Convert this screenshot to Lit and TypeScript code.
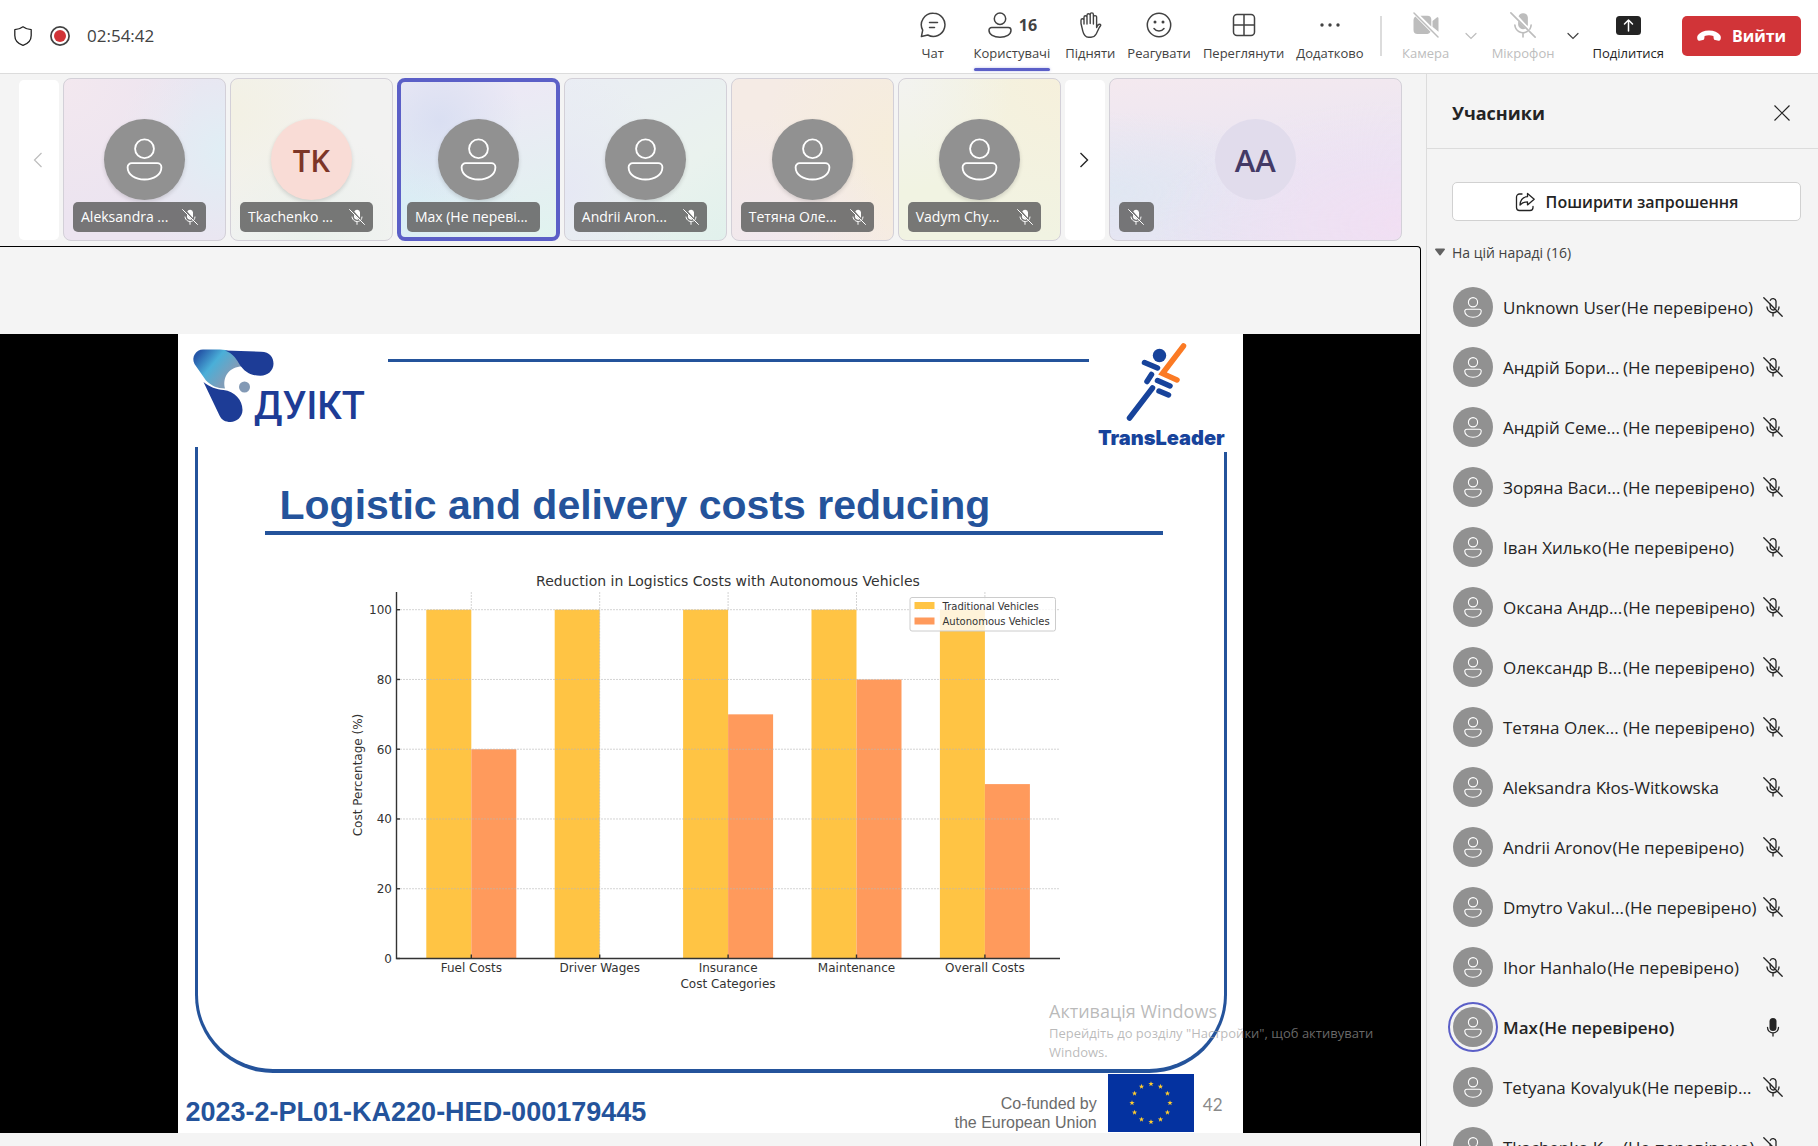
import { LitElement, html, svg, css, nothing } from "lit";
import { customElement, property } from "lit/decorators.js";
import { classMap } from "lit/directives/class-map.js";

interface Tile { name: string; muted: boolean; tone: string; initials?: string; active?: boolean; }
interface Person { name: string; note?: string; cut?: boolean; speaking?: boolean; }

const NOTE = "(Не перевірено)";

const TILES: Tile[] = [
  { name: "Aleksandra ...", muted: true, tone: "lilac" },
  { name: "Tkachenko ...", muted: true, tone: "sand", initials: "TK" },
  { name: "Max (Не переві...", muted: false, tone: "sky", active: true },
  { name: "Andrii Aron...", muted: true, tone: "mint" },
  { name: "Тетяна Оле...", muted: true, tone: "peach" },
  { name: "Vadym Chy...", muted: true, tone: "lemon" },
];

const PEOPLE: Person[] = [
  { name: "Unknown User", note: NOTE },
  { name: "Андрій Бори...", note: NOTE, cut: true },
  { name: "Андрій Семе...", note: NOTE, cut: true },
  { name: "Зоряна Васи...", note: NOTE, cut: true },
  { name: "Іван Хилько", note: NOTE },
  { name: "Оксана Андр...", note: NOTE, cut: true },
  { name: "Олександр В...", note: NOTE, cut: true },
  { name: "Тетяна Олек...", note: NOTE, cut: true },
  { name: "Aleksandra Kłos-Witkowska" },
  { name: "Andrii Aronov", note: NOTE },
  { name: "Dmytro Vakul...", note: NOTE, cut: true },
  { name: "Ihor Hanhalo", note: NOTE },
  { name: "Max", note: NOTE, speaking: true },
  { name: "Tetyana Kovalyuk", note: "(Не перевір..." },
  { name: "Tkachenko K...", note: NOTE, cut: true },
];

const personIcon = (stroke: number) => html`<svg class="person" viewBox="0 0 36 42" fill="none" stroke="currentColor" stroke-width=${stroke} aria-hidden="true">
  <circle cx="18" cy="10.5" r="9.2"/>
  <path d="M5.5 24.5h25a4 4 0 0 1 4 4c0 7.5-7.5 12-16.5 12S1.5 36 1.5 28.5a4 4 0 0 1 4-4z"/>
</svg>`;

const micOffOutline = html`<svg class="mic" viewBox="0 0 20 20" fill="none" stroke="currentColor" stroke-width="1.3" stroke-linecap="round" aria-hidden="true">
  <path d="M7.2 7.2V10a3 3 0 0 0 4.400 2.600M7.300 3.300A3 3 0 0 1 13 4.200V10q0 .6-.2 1.100"/>
  <path d="M4 10a6 6 0 0 0 9.400 4.600M16 10a6 6 0 0 1-.8 3M10 16v3"/>
  <path d="M.8.8l18.400 18.400"/>
</svg>`;

const micOffFilled = html`<svg class="mic" viewBox="0 0 24 24" fill="none" stroke="currentColor" stroke-width="1.5" stroke-linecap="round" aria-hidden="true">
  <path d="M7.500 8.200V12a4.500 4.500 0 0 0 6.900 3.200zM7.900 3.900A4.500 4.500 0 0 1 16.500 5v7l-.4 1z" fill="currentColor" stroke="none"/>
  <path d="M4.500 12a7.500 7.500 0 0 0 11.300 6M19.500 12a7.500 7.500 0 0 1-1.200 3.800M12 19.400v3.600M.8.8l22.400 22.400"/>
</svg>`;

const micFilled = html`<svg class="mic" viewBox="0 0 20 20" fill="none" stroke="currentColor" stroke-width="1.3" stroke-linecap="round" aria-hidden="true">
  <rect x="6.5" y="1" width="7" height="13" rx="3.5" fill="currentColor" stroke="none"/>
  <path d="M4.5 10.5a5.5 5.5 0 0 0 11 0M10 16v3"/>
</svg>`;

const chevron = html`<svg class="chev" viewBox="0 0 12 8" fill="none" stroke="currentColor" stroke-width="1.2" stroke-linecap="round" aria-hidden="true"><path d="M1 1.5l5 5 5-5"/></svg>`;

@customElement("call-toolbar")
export class CallToolbar extends LitElement {
  static styles = css`
    :host { display: block; }
    * { box-sizing: border-box; }
    .bar { display: flex; align-items: center; height: 74px; padding: 0 17px 2px 13px; background: #fff; border-bottom: 1px solid #dcdcdc; color: #424242; }
    button { font: inherit; color: inherit; background: none; border: 0; padding: 0; }
    .shield { width: 20px; height: 20px; }
    .rec { width: 20px; height: 20px; margin: 0 17px; }
    .clock { font-size: 17px; }
    .tools { display: flex; margin-left: auto; align-items: center; }
    .tool { position: relative; display: flex; flex-direction: column; align-items: center; min-width: 60px; height: 71px; padding: 11px 6px 0; font-size: 13px; line-height: 18px; }
    .tool .glyph { display: flex; align-items: center; justify-content: center; gap: 6px; height: 28px; margin-bottom: 5px; }
    .glyph svg { width: 26px; height: 26px; }
    .count { font-size: 16px; font-weight: 700; }
    .current { margin-left: 2px; padding: 11px 9px 0; }
    .current::after { content: ""; position: absolute; left: 9px; right: 9px; bottom: 0; height: 3px; border-radius: 2px; background: #5b5fc7; box-shadow: 0 0 3px #5b5fc766; }
    .off { color: #bdbdbd; }
    .rule { width: 2px; height: 40px; margin: 0 14px 0 10px; background: #dcdcdc; }
    .more { display: flex; align-items: center; justify-content: center; width: 28px; height: 40px; }
    .more.off { width: 30px; }
    .more:not(.off) { width: 26px; }
    .chev { width: 12px; height: 8px; }
    .share { color: #242424; }
    .leave { display: flex; align-items: center; justify-content: center; gap: 11px; width: 119px; height: 40px; margin-left: 12px; border-radius: 5px; background: #d13438; color: #fff; font-size: 16px; font-weight: 700; }
    .leave svg { width: 24px; height: 12px; }
  `;

  render() {
    return html`<header class="bar">
      <svg class="shield" viewBox="0 0 20 20" fill="none" stroke="#242424" stroke-width="1.3" stroke-linejoin="round" aria-hidden="true"><path d="M10 .8c2.400 1.800 5 2.700 8.200 2.900V9.500c0 5-3.200 8.200-8.200 9.900C5 17.700 1.800 14.500 1.800 9.500V3.700C5 3.500 7.600 2.600 10 .8z"/></svg>
      <svg class="rec" viewBox="0 0 20 20" role="img" aria-label="Запис"><circle cx="10" cy="10" r="9.100" fill="none" stroke="#424242" stroke-width="1.700"/><circle cx="10" cy="10" r="6" fill="#d13438"/></svg>
      <time class="clock">02:54:42</time>
      <nav class="tools">
        <button class="tool"><span class="glyph"><svg viewBox="0 0 26 26" fill="none" stroke="currentColor" stroke-width="1.500" stroke-linecap="round" stroke-linejoin="round"><path d="M13.500 1.200A11.600 11.600 0 1 1 7.800 23L1.400 24.600 2.700 18.200A11.600 11.600 0 0 1 13.500 1.200zM9.500 10.500h8M9.500 15.500h5"/></svg></span>Чат</button>
        <button class="tool current"><span class="glyph"><svg viewBox="0 0 26 26" fill="none" stroke="currentColor" stroke-width="1.500"><circle cx="13" cy="6.700" r="5.700"/><path d="M4.700 15.500h16.600a2.700 2.700 0 0 1 2.700 2.700c0 4.300-4.800 7-11 7s-11-2.700-11-7a2.700 2.700 0 0 1 2.700-2.700z"/></svg><span class="count">16</span></span>Користувачі</button>
        <button class="tool"><span class="glyph"><svg viewBox="0 0 26 26" fill="none" stroke="currentColor" stroke-width="1.400" stroke-linecap="round" stroke-linejoin="round"><path d="M7 12V5.200a1.500 1.500 0 0 1 3 0V3.300a1.500 1.500 0 0 1 3.200 0v-.8a1.500 1.500 0 0 1 3.200 0v2.700a1.500 1.500 0 0 1 3.200 0V15.500c.7-2.400 1.700-3.300 3-3.300 1.100 0 1.400 1 .9 1.600-2 2.300-2.800 5.400-4.300 8.200-1.100 2-2.500 3.200-5.200 3.200h-2.500c-3.100 0-4.700-1.900-5.700-6L4 11.500V8.300a1.500 1.500 0 0 1 3 0M10 5.200V12M13.200 3.300V11.500M16.400 5.200V12"/></svg></span>Підняти</button>
        <button class="tool"><span class="glyph"><svg viewBox="0 0 26 26" fill="none" stroke="currentColor" stroke-width="1.500" stroke-linecap="round"><circle cx="13" cy="13" r="11.700"/><path d="M8 16.500a6.300 6.300 0 0 0 10 0"/><circle cx="9" cy="10" r="1.500" fill="currentColor" stroke="none"/><circle cx="17" cy="10" r="1.500" fill="currentColor" stroke="none"/></svg></span>Реагувати</button>
        <button class="tool"><span class="glyph"><svg viewBox="0 0 26 26" fill="none" stroke="currentColor" stroke-width="1.500"><rect x="2.500" y="2.500" width="21" height="21" rx="3.500"/><path d="M13 2.500v21M2.500 13h21"/></svg></span>Переглянути</button>
        <button class="tool"><span class="glyph"><svg viewBox="0 0 26 26" fill="currentColor"><circle cx="5" cy="13" r="1.700"/><circle cx="13" cy="13" r="1.700"/><circle cx="21" cy="13" r="1.700"/></svg></span>Додатково</button>
        <span class="rule"></span>
        <button class="tool off" disabled><span class="glyph"><svg viewBox="0 0 26 26" fill="currentColor"><path d="M2.400 4.500 17.500 19.800A4 4 0 0 1 14.500 22H4.500a4 4 0 0 1-4-4V8a4 4 0 0 1 1.900-3.500zM7.500 3.700h7a3.800 3.800 0 0 1 3.800 3.800v7zM19.500 9l4.300-3.500c.8-.6 1.700-.2 1.700.8v13.400l-6-5z"/><path d="M1 1l24 24" stroke="currentColor" stroke-width="1.500" stroke-linecap="round"/></svg></span>Камера</button>
        <button class="more off" disabled aria-label="Параметри камери">${chevron}</button>
        <button class="tool off" disabled><span class="glyph">${micOffFilled}</span>Мікрофон</button>
        <button class="more" aria-label="Параметри мікрофона">${chevron}</button>
        <button class="tool share"><span class="glyph"><svg viewBox="0 0 26 26"><rect x="1" y="4" width="25" height="19" rx="3.500" fill="#242424"/><path d="M13.500 19V8M9.500 12l4-4 4 4" fill="none" stroke="#fff" stroke-width="1.500" stroke-linecap="round" stroke-linejoin="round"/></svg></span>Поділитися</button>
        <button class="leave"><svg viewBox="0 0 24 12" fill="#fff" aria-hidden="true"><path d="M12 .5c5 0 9 1.800 11 4.500 1.200 1.600.9 3.400.4 4.700-.3.800-1.100 1.200-1.900 1L18.200 10c-.8-.2-1.400-.8-1.500-1.600l-.3-2.300a13.500 13.500 0 0 0-8.800 0l-.3 2.300c-.1.800-.7 1.400-1.500 1.600l-3.300.7c-.8.200-1.600-.2-1.900-1C.1 8.400-.2 6.600 1 5 3 2.300 7 .5 12 .5z"/></svg>Вийти</button>
      </nav>
    </header>`;
  }
}

@customElement("film-strip")
export class FilmStrip extends LitElement {
  static styles = css`
    :host { display: block; }
    * { box-sizing: border-box; }
    .strip { display: grid; grid-template-columns: 40px repeat(6, 5fr) 40px 9fr; gap: 4px; align-items: center; padding: 4px 24px 5px 19px; }
    .page { display: grid; place-items: center; height: 160px; padding: 0 2px 0 0; border: 0; border-radius: 5px; background: #fff; color: #242424; }
    .page svg { width: 10px; height: 16px; }
    .page:disabled { color: #bdbdbd; }
    .tile { position: relative; display: grid; place-items: center; height: 163px; border: 1px solid #d3d0d8; border-radius: 8px; }
    .active { border: 4px solid #5b5fc7; }
    .face { display: grid; place-items: center; width: 81px; height: 81px; border-radius: 50%; background: #919191; color: #fff; font-size: 31px; font-weight: 600; box-shadow: 0 2px 4px #00000024; }
    .face .person { width: 37px; height: 43px; }
    .rose { background: #f9dcd6; color: #7d3527; }
    .violet { background: #e1dcec; color: #443a66; box-shadow: none; }
    .tag { position: absolute; left: 9px; right: 19px; bottom: 8px; display: flex; align-items: center; justify-content: space-between; height: 30px; padding: 0 8px 1px; border-radius: 5px; background: #656565e0; color: #fff; font-size: 14px; line-height: 18px; white-space: nowrap; }
    .active .tag { left: 6px; right: 16px; bottom: 5px; }
    .tag .mic { width: 16px; height: 16px; }
    .small { right: auto; width: 35px; justify-content: center; padding: 0; }
    .lilac { background: radial-gradient(circle at 0 0, #f3e8ef, transparent 60%), radial-gradient(circle at 100% 45%, #e0eef5, transparent 60%), #ece4f0; }
    .sand { background: radial-gradient(circle at 0 20%, #f3f1e4, transparent 60%), radial-gradient(circle at 50% 100%, #eaf1ec, transparent 60%), #f2f2f1; }
    .sky { background: radial-gradient(circle at 25% 25%, #dadff2, transparent 50%), radial-gradient(circle at 0 85%, #d9edf5, transparent 60%), linear-gradient(165deg, #ece9f5 20%, #e0f3ef); }
    .mint { background: radial-gradient(circle at 0 70%, #e6e8f4, transparent 60%), linear-gradient(150deg, #eaedf4, #eaf2ee 60%, #e1f1ec); }
    .peach { background: radial-gradient(circle at 20% 100%, #f1e8ee, transparent 60%), radial-gradient(circle at 100% 40%, #f6eddb, transparent 70%), #f5ebe5; }
    .lemon { background: radial-gradient(circle at 0 0, #f3f3f0, transparent 50%), radial-gradient(circle at 100% 0, #f6f0dc, transparent 70%), #f1f3e2; }
    .pink { background: radial-gradient(ellipse at 100% 90%, #f1dff3, transparent 60%), radial-gradient(ellipse at 0 70%, #e0e7f2, transparent 50%), linear-gradient(175deg, #f4e9ef, #e9e5f3 60%); }
  `;

  render() {
    return html`<div class="strip">
      <button class="page" disabled aria-label="Назад"><svg viewBox="0 0 10 16" fill="none" stroke="currentColor" stroke-width="1.200"><path d="M8.500 1 1.500 8l7 7"/></svg></button>
      ${TILES.map((t) => html`<div class=${classMap({ tile: true, [t.tone]: true, active: !!t.active })}>
        <div class=${classMap({ face: true, rose: !!t.initials })}>${t.initials ?? personIcon(1.8)}</div>
        <div class="tag"><span>${t.name}</span>${t.muted ? micOffFilled : nothing}</div>
      </div>`)}
      <button class="page" aria-label="Далі"><svg viewBox="0 0 10 16" fill="none" stroke="currentColor" stroke-width="1.400"><path d="M1.500 1l7 7-7 7"/></svg></button>
      <div class="tile pink"><div class="face violet">AA</div><div class="tag small">${micOffFilled}</div></div>
    </div>`;
  }
}

@customElement("cost-chart")
export class CostChart extends LitElement {
  static styles = css`
    :host { display: block; }
    svg { display: block; width: 100%; font-family: "DejaVu Sans", sans-serif; fill: #333; }
    .title { font-size: 14px; }
    .label { font-size: 12px; }
    .key { font-size: 10px; }
    .grid { stroke: #b8b8b8; stroke-opacity: 0.6; stroke-dasharray: 2 1; }
    .axis { stroke: #333; fill: none; stroke-width: 1.4; }
    .old { fill: #ffc444; }
    .new { fill: #ff9a5c; }
    .legend { fill: #fff; fill-opacity: 0.8; stroke: #ccc; }
  `;

  private rows = [
    { label: "Fuel Costs", before: 100, after: 60 },
    { label: "Driver Wages", before: 100, after: 0 },
    { label: "Insurance", before: 100, after: 70 },
    { label: "Maintenance", before: 100, after: 80 },
    { label: "Overall Costs", before: 100, after: 50 },
  ];

  render() {
    const base = 388.5;
    const y = (v: number) => base - v * 3.488;
    const x = (i: number) => 126.3 + i * 128.4;
    const ticks = [0, 20, 40, 60, 80, 100];
    return html`<svg viewBox="0 0 730 425" role="img" aria-label="Reduction in Logistics Costs with Autonomous Vehicles">
      <text class="title" x="383" y="16" text-anchor="middle">Reduction in Logistics Costs with Autonomous Vehicles</text>
      ${this.rows.map((r, i) => svg`
        <rect class="old" x=${x(i) - 45} y=${y(r.before)} width="45" height=${base - y(r.before)}></rect>
        <rect class="new" x=${x(i)} y=${y(r.after)} width="45" height=${base - y(r.after)}></rect>
        <line class="grid" x1=${x(i)} x2=${x(i)} y1="22" y2=${y(r.before)}></line>
        ${r.after === 0 ? svg`<line class="grid" x1=${x(i)} x2=${x(i)} y1=${y(100)} y2=${base}></line>` : nothing}
        <line class="axis" x1=${x(i)} x2=${x(i)} y1=${base - 4} y2=${base}></line>
        <text class="label" x=${x(i)} y="402" text-anchor="middle">${r.label}</text>`)}
      ${ticks.map((t) => svg`
        ${t ? svg`<line class="grid" x1="52" x2="715" y1=${y(t)} y2=${y(t)}></line>` : nothing}
        <line class="axis" x1="51.5" x2="55" y1=${y(t)} y2=${y(t)}></line>
        <text class="label" x="47" y=${y(t) + 4.5} text-anchor="end">${t}</text>`)}
      <path class="axis" d="M51.500 22V388.500H715"/>
      <text class="label" x="383" y="418" text-anchor="middle">Cost Categories</text>
      <text class="label" transform="translate(17 205) rotate(-90)" text-anchor="middle">Cost Percentage (%)</text>
      <rect class="legend" x="565" y="27.500" width="145.500" height="33.500" rx="2"/>
      <rect class="old" x="569.500" y="32" width="20" height="7"/>
      <rect class="new" x="569.500" y="47.500" width="20" height="7"/>
      <text class="key" x="597.500" y="39.500">Traditional Vehicles</text>
      <text class="key" x="597.500" y="54.500">Autonomous Vehicles</text>
    </svg>`;
  }
}

@customElement("shared-slide")
export class SharedSlide extends LitElement {
  static styles = css`
    :host { display: block; }
    * { box-sizing: border-box; }
    .slide { display: flex; flex-direction: column; min-height: 100%; background: #fff; font-family: "Liberation Sans", Arial, sans-serif; color: #24539b; }
    .head { display: flex; align-items: flex-start; height: 113px; padding: 8px 13px 0 15px; }
    .uni { overflow: visible; width: 176px; height: 76px; margin-top: 6px; font-family: Roboto, sans-serif; font-weight: 500; }
    .line { flex: 1; height: 3px; margin: 17px 8px 0 19px; background: #24539b; }
    .lead { position: relative; overflow: visible; width: 133px; height: 110px; background: #fff; font-family: Inter, sans-serif; font-weight: 900; }
    .frame { flex: 1; margin: 0 16px 0 17px; padding: 32px 0 0; border: solid #24539b; border-width: 0 3px 4px; border-radius: 0 0 78px 78px; }
    h2 { margin: 0 61px 0 67px; padding-left: 15px; border-bottom: 4px solid #24539b; font-size: 41px; line-height: 52px; white-space: nowrap; }
    .chart { margin: 35px 149px 0 147px; }
    .foot { display: flex; align-items: center; height: 60px; padding: 0 20px 0 8px; }
    .code { font-size: 27px; font-weight: 700; padding-top: 19px; margin-right: auto; }
    .fund { padding-top: 20px; text-align: right; font-size: 16px; line-height: 19px; color: #6b6b6b; }
    .flag { width: 86px; height: 58px; margin: 0 9px 0 11px; }
    .num { font-family: Lato, sans-serif; font-size: 17px; color: #8a8a8a; padding-top: 4px; }
  `;

  private star(cx: number, cy: number, r: number) {
    const pts = Array.from({ length: 10 }, (_, i) => {
      const a = (Math.PI / 5) * i - Math.PI / 2;
      const q = i % 2 ? r * 0.4 : r;
      return `${cx + q * Math.cos(a)},${cy + q * Math.sin(a)}`;
    }).join(" ");
    return svg`<polygon points=${pts} fill="#ffcc2e"></polygon>`;
  }

  render() {
    return html`<article class="slide">
      <div class="head">
        <svg class="uni" viewBox="0 0 176 76" role="img" aria-label="ДУІКТ">
          <defs><linearGradient id="g" x1="0" y1="0.100" x2="0.900" y2="0.700"><stop offset="0.080" stop-color="#2557a8"/><stop offset="0.450" stop-color="#4aafd8"/><stop offset="0.850" stop-color="#7f9db9"/></linearGradient></defs>
          <path d="M10 1.500h17c8 0 13 3 17 9l5 8c-12 0-20 10-17 22-8 0-14-3-19-8L1.500 16C-2 9 3 1.500 10 1.500z" fill="url(#g)"/>
          <path d="M32 2.500l36 1.200c9 0 12.500 6 12.500 12 0 7-6 12-13 12-9 0-16-3-22-13-3-5-5.500-9-13.500-12.200z" fill="#1d3c96"/>
          <path d="M10.500 34c6 5 13 7.500 20 8 11 1 19 10 19 20 0 7-6 12-12 12-5 0-9-2-11-6.500z" fill="#1d3c96"/>
          <circle cx="51.500" cy="39" r="5.500" fill="#8299b5"/>
          <text x="61" y="71" font-size="38" fill="#1d3c96">ДУІКТ</text>
        </svg>
        <div class="line"></div>
        <svg class="lead" viewBox="0 0 133 110" role="img" aria-label="TransLeader" stroke-width="5.500" stroke-linecap="round" fill="none">
          <circle cx="62.500" cy="13.500" r="6.700" fill="#17439b"/>
          <path d="M47.500 20.500l13 5.500M54.500 32.500l-4.500 7M60.500 38.500l12.500 5.500M62 49l9.500 4M55.500 46 32.500 76" stroke="#17439b"/>
          <path d="M86.500 4 65.500 31.500 80 38" stroke="#fb7a24"/>
          <text x="1" y="103" font-size="20" fill="#17439b">TransLeader</text>
        </svg>
      </div>
      <div class="frame">
        <h2>Logistic and delivery costs reducing</h2>
        <cost-chart class="chart"></cost-chart>
      </div>
      <div class="foot">
        <span class="code">2023-2-PL01-KA220-HED-000179445</span>
        <span class="fund">Co-funded by<br>the European Union</span>
        <svg class="flag" viewBox="0 0 86 58" aria-hidden="true"><rect width="86" height="58" fill="#0432a0"/>
          ${Array.from({ length: 12 }, (_, i) => this.star(43 + 19 * Math.cos((i * Math.PI) / 6), 29 + 19 * Math.sin((i * Math.PI) / 6), 2.8))}
        </svg>
        <span class="num">42</span>
      </div>
    </article>`;
  }
}

@customElement("people-panel")
export class PeoplePanel extends LitElement {
  @property({ type: Number }) count = 16;

  static styles = css`
    :host { display: block; }
    * { box-sizing: border-box; }
    button { font: inherit; color: inherit; background: none; border: 0; padding: 0; }
    .panel { height: 100%; border-left: 1px solid #dcdcdc; color: #242424; }
    .head { display: flex; align-items: center; justify-content: space-between; height: 75px; padding: 4px 28px 0 25px; border-bottom: 1px solid #dcdcdc; }
    h1 { margin: 0; font-size: 18px; font-weight: 700; }
    .close { display: grid; place-items: center; }
    .close svg { width: 16px; height: 16px; }
    .invite { display: flex; align-items: center; justify-content: center; gap: 11px; width: calc(100% - 42px); height: 39px; margin: 33px 17px 0 25px; border: 1px solid #d1d1d1; border-radius: 5px; background: #fff; font-size: 16px; font-weight: 600; }
    .invite svg { width: 20px; height: 20px; }
    .group { display: flex; align-items: center; gap: 7px; height: 22px; margin: 20px 0 14px 8px; font-size: 14px; color: #424242; }
    .group svg { width: 10px; height: 8px; }
    ul { margin: 0; padding: 0; list-style: none; }
    .row { display: flex; align-items: center; height: 60px; padding: 0 35px 0 26px; font-size: 17px; white-space: nowrap; }
    .pic { display: grid; place-items: center; width: 40px; height: 40px; margin-right: 10px; border-radius: 50%; background: #919191; color: #fff; }
    .pic .person { width: 18px; height: 21px; }
    .note { margin-left: 1px; }
    .cut { min-width: 119px; }
    .mic { width: 20px; height: 20px; margin-left: auto; }
    .speaking { font-weight: 600; }
    .speaking .pic { outline: 2px solid #5b5fc7; outline-offset: 3px; }
  `;

  render() {
    return html`<aside class="panel">
      <div class="head"><h1>Учасники</h1>
        <button class="close" aria-label="Закрити"><svg viewBox="0 0 16 16" fill="none" stroke="currentColor" stroke-width="1.200"><path d="M.5.5l15 15M15.500.5l-15 15"/></svg></button></div>
      <button class="invite"><svg viewBox="0 0 20 20" fill="none" stroke="currentColor" stroke-width="1.300" stroke-linejoin="round" stroke-linecap="round"><path d="M7 2H4.500A3 3 0 0 0 1.500 5v10.500a3 3 0 0 0 3 3H15a3 3 0 0 0 3-3v-1"/><path d="M12.500 1.500l6.700 5.700-6.700 5.700V9.800c-3.500 0-5.500 1-7.500 3.200.3-5 3-8 7.500-8.300z"/></svg>Поширити запрошення</button>
      <button class="group"><svg viewBox="0 0 10 8" aria-hidden="true"><path d="M0 1.500Q0 .5 1 .5h8q1 0 1 1L5.600 7.200q-.6.600-1.200 0z" fill="#616161"/></svg>На цій нараді (${this.count})</button>
      <ul>${PEOPLE.map((p) => html`<li class=${classMap({ row: true, speaking: !!p.speaking })}>
        <span class="pic">${personIcon(2.2)}</span>
        <span class=${classMap({ name: true, cut: !!p.cut })}>${p.name}</span>
        ${p.note ? html`<span class="note">${p.note}</span>` : nothing}
        ${p.speaking ? micFilled : micOffOutline}
      </li>`)}</ul>
    </aside>`;
  }
}

@customElement("app-root")
export class AppRoot extends LitElement {
  static styles = css`
    :host { display: grid; grid-template-rows: auto minmax(0, 1fr); height: 100vh; overflow: hidden; background: #f4f4f4; font-family: "Open Sans", "Segoe UI", sans-serif; }
    * { box-sizing: border-box; }
    .body { display: grid; grid-template-columns: minmax(0, 1fr) 392px; min-height: 0; }
    .left { display: flex; flex-direction: column; min-width: 0; min-height: 0; }
    .stage { position: relative; flex: 1; min-height: 0; margin-right: 5px; padding-top: 87px; border: solid #000; border-width: 1px 1px 0 0; border-top-right-radius: 4px; }
    .video { display: flex; justify-content: center; aspect-ratio: 16 / 9; background: #000; }
    .slide { width: 75%; }
    .mark { position: absolute; right: 24px; bottom: 84px; width: 347px; color: #9b9b9bb0; font-size: 13px; line-height: 19px; }
    .mark strong { display: block; font-size: 18px; line-height: 26px; font-weight: 400; }
    .people { min-height: 0; overflow: hidden; }
  `;

  render() {
    return html`
      <call-toolbar></call-toolbar>
      <main class="body">
        <section class="left">
          <film-strip></film-strip>
          <div class="stage">
            <div class="video"><shared-slide class="slide"></shared-slide></div>
            <div class="mark"><strong>Активація Windows</strong>Перейдіть до розділу "Настройки", щоб активувати Windows.</div>
          </div>
        </section>
        <people-panel class="people" .count=${16}></people-panel>
      </main>`;
  }
}
